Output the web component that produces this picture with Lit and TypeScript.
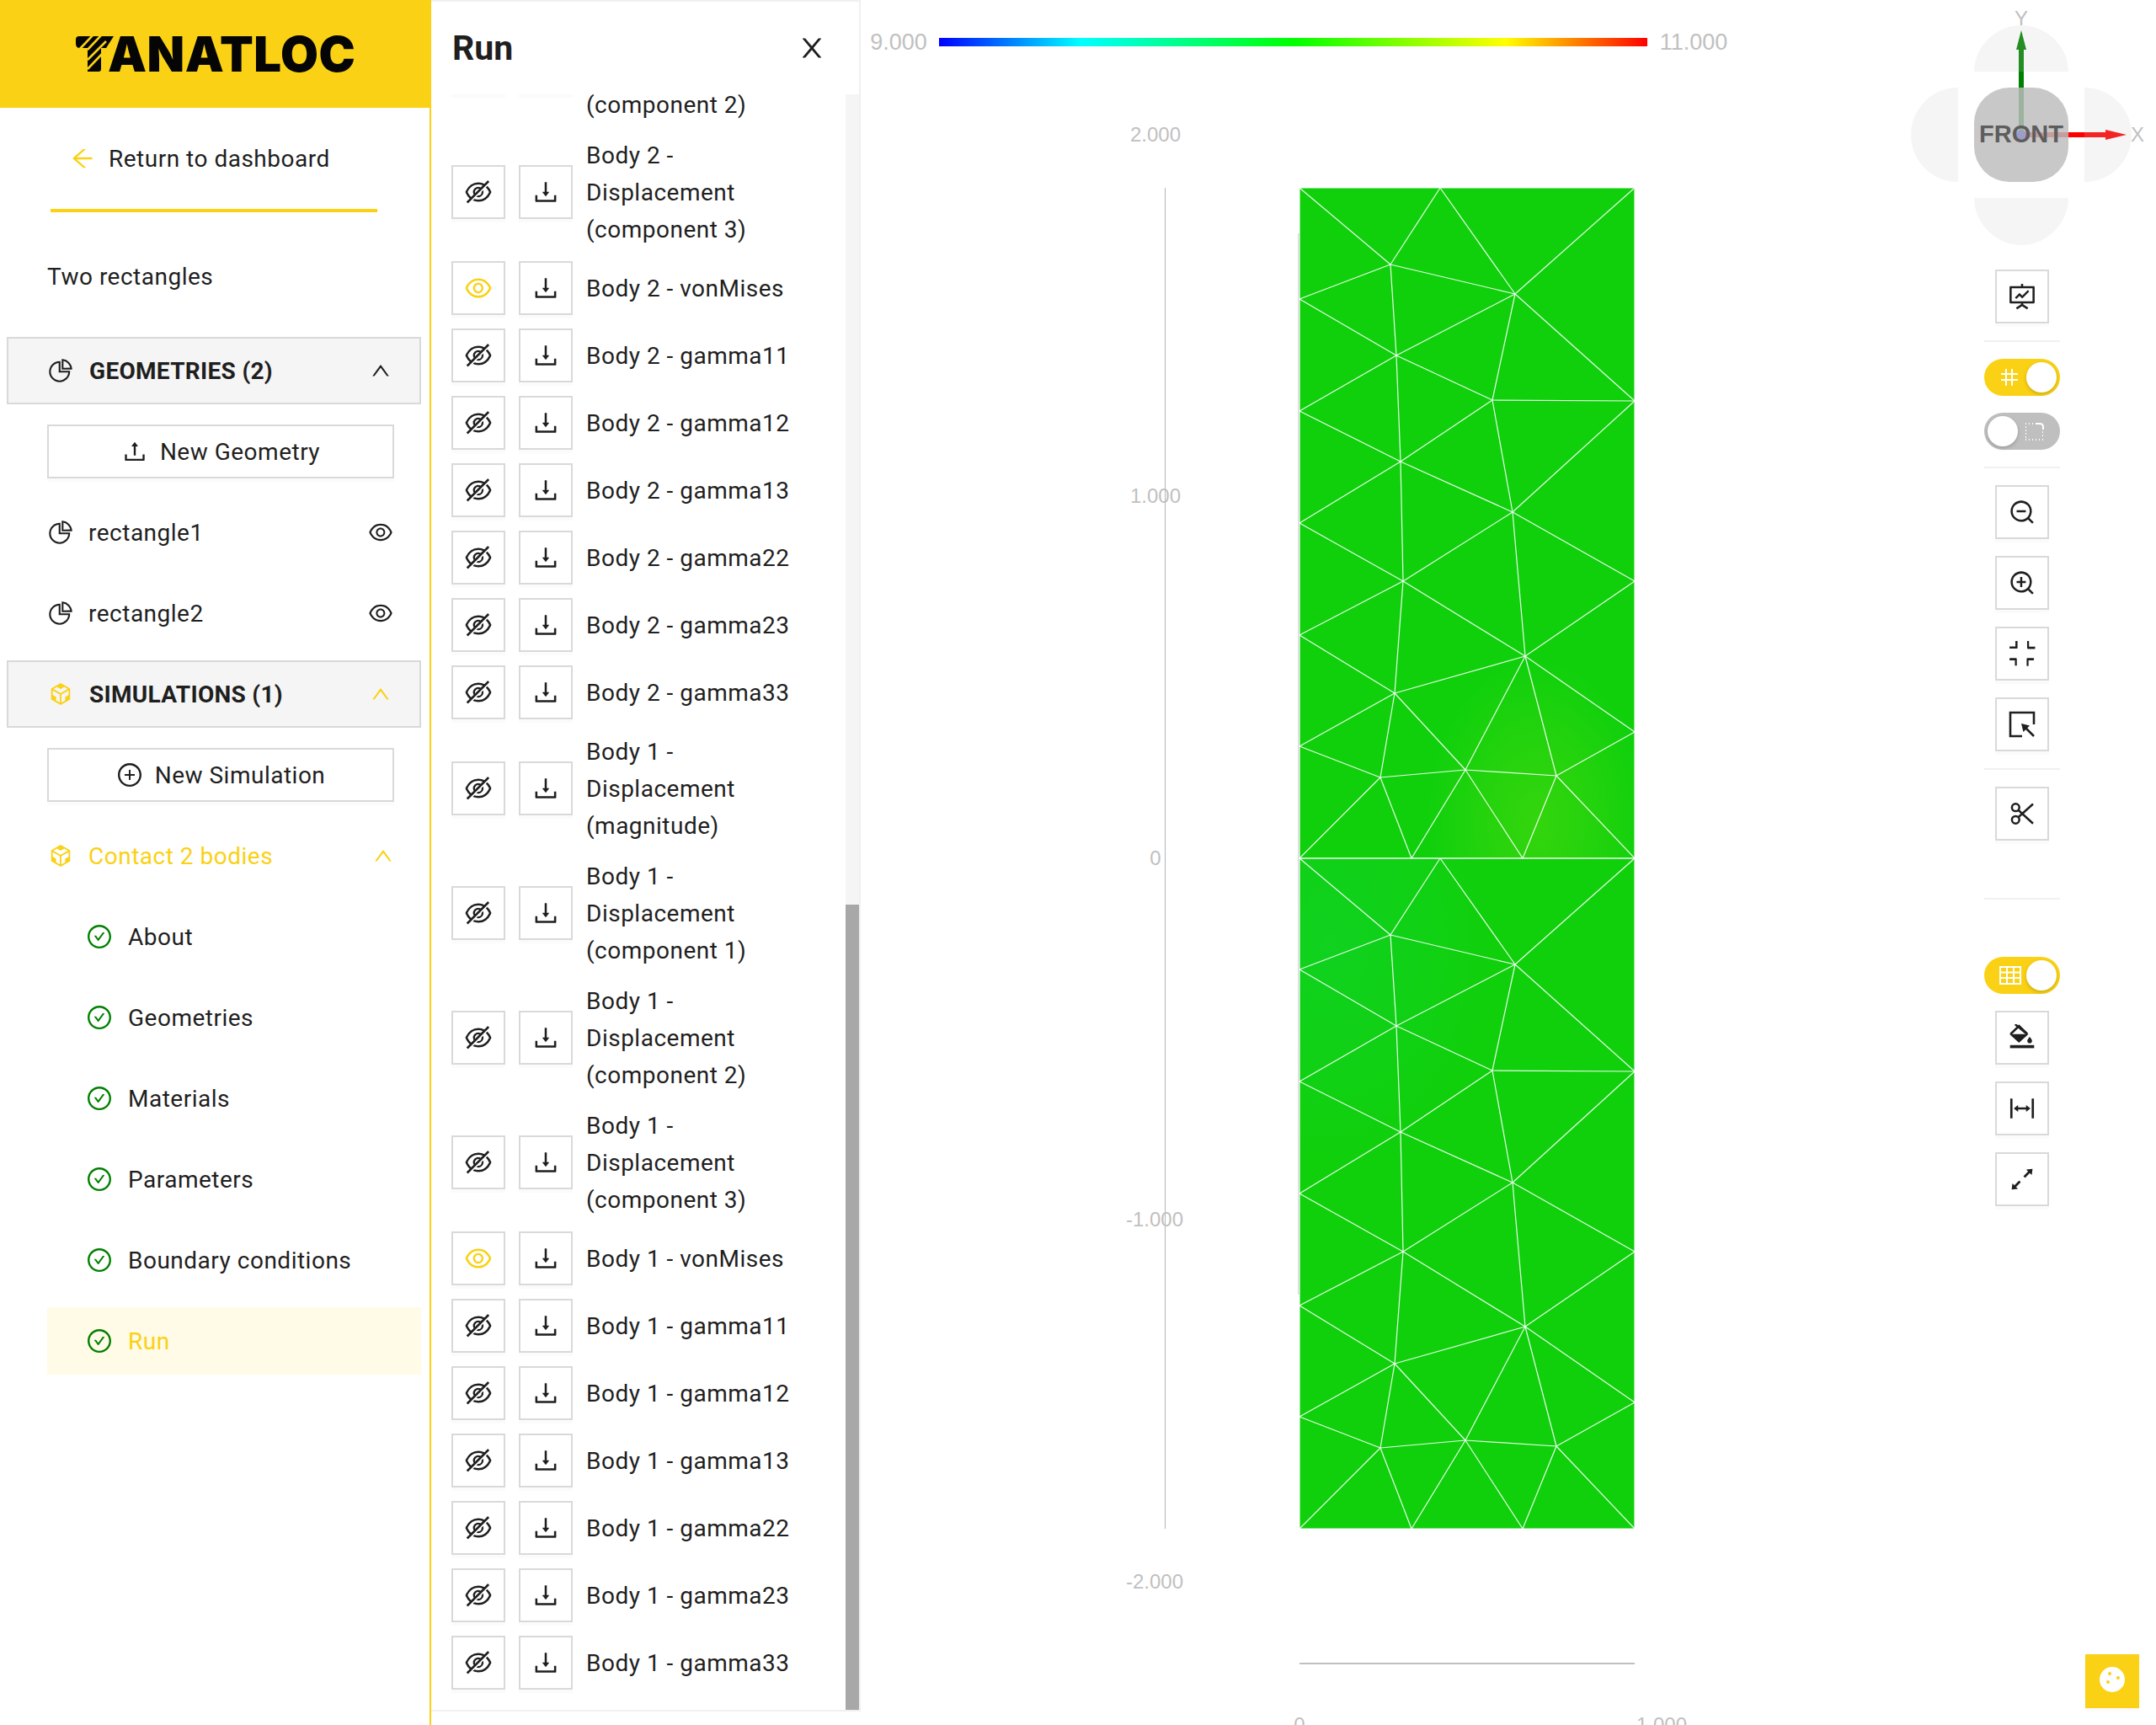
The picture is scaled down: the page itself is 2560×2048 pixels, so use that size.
import { LitElement, html, css, svg } from "lit";
import { customElement } from "lit/decorators.js";

const RING = "M512 64C264.6 64 64 264.6 64 512s200.6 448 448 448 448-200.6 448-448S759.4 64 512 64zm0 820c-205.4 0-372-166.6-372-372s166.6-372 372-372 372 166.6 372 372-166.6 372-372 372z";
const SEARCH = "M921 867L775 721c122.1-148.9 113.6-369.5-26-509-148-148.1-388.4-148.1-537 0-148.1 148.6-148.1 389 0 537 139.5 139.6 360.1 148.1 509 26l146 146c3.2 2.8 8.3 2.8 11 0l43-43c2.8-2.7 2.8-7.8 0-11zM696 696c-118.8 118.7-311.2 118.7-430 0-118.7-118.8-118.7-311.2 0-430 118.8-118.7 311.2-118.7 430 0 118.7 118.8 118.7 311.2 0 430z";

const ICONS: Record<string, string[]> = {
  arrowLeft: ["M872 474H286.9l350.2-304c5.6-4.9 2.2-14-5.2-14h-88.5c-3.9 0-7.6 1.4-10.5 3.9L155 487.8a31.96 31.96 0 000 48.3L535.1 866c1.5 1.3 3.3 2 5.2 2h91.5c7.4 0 10.8-9.2 5.2-14L286.9 550H872c4.4 0 8-3.6 8-8v-60c0-4.4-3.6-8-8-8z"],
  pie: ["M864 518H506V160c0-4.4-3.6-8-8-8h-26a398.46 398.46 0 00-282.8 117.1 398.19 398.19 0 00-85.7 127.1A397.61 397.61 0 0072 552a398.46 398.46 0 00117.1 282.8c36.7 36.7 79.5 65.6 127.1 85.7A397.61 397.61 0 00472 952a398.46 398.46 0 00282.8-117.1c36.7-36.7 65.6-79.5 85.7-127.1A397.61 397.61 0 00872 552v-26c0-4.4-3.6-8-8-8zM705.7 787.8A331.59 331.59 0 01470.4 884c-88.1-.4-170.9-34.9-233.2-97.2C174.5 724.1 140 640.7 140 552c0-88.7 34.5-172.1 97.2-234.8 54.6-54.6 124.9-87.9 200.8-95.5V586h364.3c-7.7 76.3-41.3 147-96.6 201.8zM952 462.4l-2.6-28.2c-8.5-92.1-49.4-179-115.2-244.6A399.4 399.4 0 00589 74.6L560.7 72c-4.7-.4-8.7 3.2-8.7 7.9V464c0 4.4 3.6 8 8 8l384-1c4.7 0 8.4-4 8-8.6zm-332.2-58.2V147.6a332.24 332.24 0 01166.4 89.8c45.7 45.6 77 103.6 90 166.1l-256.4.7z"],
  cube: ["M709.6 210l.4-.2h.2L512 96 313.9 209.8h-.2l.7.3L151.5 304v416L512 928l360.5-208V304l-162.9-94zM482.7 843.6L339.6 761V621.4L210 547.8V372.9l272.7 157.3v313.4zM238.2 321.5l134.7-77.8 138.9 79.7 139.1-79.9 135.2 78-273.9 158-274-158zM814 548.3l-128.8 73.1v139.1l-143.9 83V530.4L814 373.1v175.2z"],
  up: ["M890.5 755.3L537.9 269.2c-12.8-17.6-39-17.6-51.7 0L133.5 755.3A8 8 0 00140 768h75c5.1 0 9.9-2.5 12.9-6.6L512 369.8l284.1 391.6c3 4.1 7.8 6.6 12.9 6.6h75c6.5 0 10.3-7.2 6.5-12.7z"],
  upload: ["M400 317.7h73.9V656c0 4.4 3.6 8 8 8h60c4.4 0 8-3.6 8-8V317.7H624c6.7 0 10.4-7.7 6.3-12.9L518.3 163a8 8 0 00-12.6 0l-112 141.7c-4.1 5.3-.4 13 6.3 13zM878 626h-60c-4.4 0-8 3.6-8 8v154H214V634c0-4.4-3.6-8-8-8h-60c-4.4 0-8 3.6-8 8v198c0 17.7 14.3 32 32 32h684c17.7 0 32-14.3 32-32V634c0-4.4-3.6-8-8-8z"],
  download: ["M505.7 661a8 8 0 0012.6 0l112-141.7c4.1-5.2.4-12.9-6.3-12.9h-74.1V168c0-4.4-3.6-8-8-8h-60c-4.4 0-8 3.6-8 8v338.3H400c-6.7 0-10.4 7.7-6.3 12.9l112 141.8zM878 626h-60c-4.4 0-8 3.6-8 8v154H214V634c0-4.4-3.6-8-8-8h-60c-4.4 0-8 3.6-8 8v198c0 17.7 14.3 32 32 32h684c17.7 0 32-14.3 32-32V634c0-4.4-3.6-8-8-8z"],
  eye: ["M942.2 486.2C847.4 286.5 704.1 186 512 186c-192.2 0-335.4 100.5-430.2 300.3a60.3 60.3 0 000 51.5C176.6 737.5 319.9 838 512 838c192.2 0 335.4-100.5 430.2-300.3 7.7-16.2 7.7-35 0-51.5zM512 766c-161.3 0-279.4-81.8-362.7-254C232.6 339.8 350.7 258 512 258c161.3 0 279.4 81.8 362.7 254C791.5 684.2 673.4 766 512 766zm-4-430c-97.2 0-176 78.8-176 176s78.8 176 176 176 176-78.8 176-176-78.8-176-176-176zm0 288c-61.9 0-112-50.1-112-112s50.1-112 112-112 112 50.1 112 112-50.1 112-112 112z"],
  eyeOff: [
    "M942.2 486.2Q889.47 375.11 816.7 305l-50.88 50.88C807.31 395.53 843.45 447.4 874.7 512 791.5 684.2 673.4 766 512 766q-72.67 0-133.87-22.38L323 798.75Q408 838 512 838q288.3 0 430.2-300.3a60.29 60.29 0 000-51.5zm-63.57-320.64L836 122.88a8 8 0 00-11.32 0L715.31 232.2Q624.86 186 512 186q-288.3 0-430.2 300.3a60.3 60.3 0 000 51.5q56.69 119.4 136.5 191.41L112.48 835a8 8 0 000 11.31L155.17 889a8 8 0 0011.31 0l712.15-712.12a8 8 0 000-11.32zM149.3 512C232.6 339.8 350.7 258 512 258c54.54 0 104.13 9.36 149.12 28.39l-70.3 70.3a176 176 0 00-238.13 238.13l-83.42 83.42C223.1 637.49 183.3 582.28 149.3 512zm246.7 0a112.11 112.11 0 01146.2-106.69L401.31 546.2A112 112 0 01396 512z",
    "M508 624c-3.46 0-6.87-.16-10.25-.47l-52.82 52.82a176.09 176.09 0 00227.42-227.42l-52.82 52.82c.31 3.38.47 6.79.47 10.25a111.94 111.94 0 01-112 112z",
  ],
  plusCircle: ["M696 480H544V328c0-4.4-3.6-8-8-8h-48c-4.4 0-8 3.6-8 8v152H328c-4.4 0-8 3.6-8 8v48c0 4.4 3.6 8 8 8h152v152c0 4.4 3.6 8 8 8h48c4.4 0 8-3.6 8-8V544h152c4.4 0 8-3.6 8-8v-48c0-4.4-3.6-8-8-8z", RING],
  check: ["M699 353h-46.9c-10.2 0-19.9 4.9-25.9 13.3L469 584.3l-71.2-98.8c-6-8.3-15.6-13.3-25.9-13.3H325c-6.5 0-10.3 7.4-6.5 12.7l124.6 172.8a31.8 31.8 0 0051.7 0l210.6-292c3.9-5.3.1-12.7-6.4-12.7z", RING],
  close: ["M563.8 512l262.5-312.9c4.4-5.2.7-13.1-6.1-13.1h-79.8c-4.7 0-9.2 2.1-12.3 5.7L511.6 449.8 295.1 191.7c-3-3.6-7.5-5.7-12.3-5.7H203c-6.8 0-10.5 7.9-6.1 13.1L459.4 512 196.9 824.9A7.95 7.95 0 00203 838h79.8c4.7 0 9.2-2.1 12.3-5.7l216.5-258.1 216.5 258.1c3 3.6 7.5 5.7 12.3 5.7h79.8c6.8 0 10.5-7.9 6.1-13.1L563.8 512z"],
  screen: [
    "M312.1 591.5c3.1 3.1 8.2 3.1 11.3 0l101.8-101.8 86.1 86.2c3.1 3.1 8.2 3.1 11.3 0l226.3-226.5c3.1-3.1 3.1-8.2 0-11.3l-36.8-36.8a8.03 8.03 0 00-11.3 0L517 485.3l-86.1-86.2a8.03 8.03 0 00-11.3 0L275.3 543.4a8.03 8.03 0 000 11.3l36.8 36.8z",
    "M904 160H548V96c0-4.4-3.6-8-8-8h-56c-4.4 0-8 3.6-8 8v64H120c-17.7 0-32 14.3-32 32v520c0 17.7 14.3 32 32 32h356.4v32L311.6 884.1a7.92 7.92 0 00-2.3 11l30.3 47.2v.1c2.4 3.7 7.4 4.7 11.1 2.3L512 838.9l161.3 105.8c3.7 2.4 8.7 1.4 11.1-2.3v-.1l30.3-47.2a8 8 0 00-2.3-11L548 776.3V744h356c17.7 0 32-14.3 32-32V192c0-17.7-14.3-32-32-32zm-40 512H160V232h704v440z",
  ],
  zoomOut: ["M637 443H325c-4.4 0-8 3.6-8 8v60c0 4.4 3.6 8 8 8h312c4.4 0 8-3.6 8-8v-60c0-4.4-3.6-8-8-8z", SEARCH],
  zoomIn: ["M637 443H519V309c0-4.4-3.6-8-8-8h-60c-4.4 0-8 3.6-8 8v134H325c-4.4 0-8 3.6-8 8v60c0 4.4 3.6 8 8 8h118v134c0 4.4 3.6 8 8 8h60c4.4 0 8-3.6 8-8V519h118c4.4 0 8-3.6 8-8v-60c0-4.4-3.6-8-8-8z", SEARCH],
  compress: ["M326 664H104c-8.8 0-16 7.2-16 16v48c0 4.4 3.6 8 8 8h174v176c0 4.4 3.6 8 8 8h48c4.4 0 8-3.6 8-8V696c0-17.7-14.3-32-32-32zm16-576h-48c-4.4 0-8 3.6-8 8v176H96c-4.4 0-8 3.6-8 8v48c0 8.8 7.2 16 16 16h222c17.7 0 32-14.3 32-32V96c0-4.4-3.6-8-8-8zm578 576H698c-17.7 0-32 14.3-32 32v224c0 4.4 3.6 8 8 8h48c4.4 0 8-3.6 8-8V736h174c4.4 0 8-3.6 8-8v-48c0-8.8-7.2-16-16-16zm0-384H746V96c0-4.4-3.6-8-8-8h-48c-4.4 0-8 3.6-8 8v224c0 17.7 14.3 32 32 32h222c8.8 0 16-7.2 16-16v-48c0-8.8-7.2-16-16-16z"],
  columnWidth: ["M180 176h-60c-4.4 0-8 3.6-8 8v656c0 4.4 3.6 8 8 8h60c4.4 0 8-3.6 8-8V184c0-4.4-3.6-8-8-8zm724 0h-60c-4.4 0-8 3.6-8 8v656c0 4.4 3.6 8 8 8h60c4.4 0 8-3.6 8-8V184c0-4.4-3.6-8-8-8zM785.3 504.3L657.7 403.6a7.23 7.23 0 00-11.7 5.7V476H378v-62.8c0-6-7-9.4-11.7-5.7L238.7 508.3a7.14 7.14 0 000 11.3l127.5 100.8c4.7 3.7 11.7.4 11.7-5.7V548h268v62.8c0 6 7 9.4 11.7 5.7l127.5-100.8c3.8-2.9 3.8-8.5.2-11.4z"],
  arrowsAlt: ["M855 160.1l-189.2 23.5c-6.6.8-9.3 8.8-4.7 13.5l54.7 54.7-153.5 153.5a8.03 8.03 0 000 11.3l45.1 45.1c3.1 3.1 8.2 3.1 11.3 0l153.6-153.6 54.7 54.7a7.94 7.94 0 0013.5-4.7L863.9 169a7.9 7.9 0 00-8.9-8.9zM416.6 562.3a8.03 8.03 0 00-11.3 0L251.8 715.9l-54.7-54.7a7.94 7.94 0 00-13.5 4.7L160.1 855c-.6 5.2 3.7 9.5 8.9 8.9l189.2-23.5c6.6-.8 9.3-8.8 4.7-13.5l-54.7-54.7 153.6-153.6c3.1-3.1 3.1-8.2 0-11.3l-45.2-45z"],
};

const icon = (name: string, size = 32) => html`<svg class="ic" width=${size} height=${size} viewBox="0 0 1024 1024" fill="currentColor">
  ${ICONS[name].map((d) => svg`<path d=${d}></path>`)}
</svg>`;

const RESULTS: { lines: string[]; shown?: boolean; cut?: boolean }[] = [
  { lines: ["(component 2)"], cut: true },
  { lines: ["Body 2 -", "Displacement", "(component 3)"] },
  { lines: ["Body 2 - vonMises"], shown: true },
  { lines: ["Body 2 - gamma11"] },
  { lines: ["Body 2 - gamma12"] },
  { lines: ["Body 2 - gamma13"] },
  { lines: ["Body 2 - gamma22"] },
  { lines: ["Body 2 - gamma23"] },
  { lines: ["Body 2 - gamma33"] },
  { lines: ["Body 1 -", "Displacement", "(magnitude)"] },
  { lines: ["Body 1 -", "Displacement", "(component 1)"] },
  { lines: ["Body 1 -", "Displacement", "(component 2)"] },
  { lines: ["Body 1 -", "Displacement", "(component 3)"] },
  { lines: ["Body 1 - vonMises"], shown: true },
  { lines: ["Body 1 - gamma11"] },
  { lines: ["Body 1 - gamma12"] },
  { lines: ["Body 1 - gamma13"] },
  { lines: ["Body 1 - gamma22"] },
  { lines: ["Body 1 - gamma23"] },
  { lines: ["Body 1 - gamma33"] },
];

const STEPS = ["About", "Geometries", "Materials", "Parameters", "Boundary conditions"];

// mesh nodes of the top body, the lower one is the same shifted by 796
const N: Record<string, [number, number]> = {
  A: [1543, 223], T: [1710, 223], B: [1941, 223],
  n1: [1651, 314], n2: [1799, 349], L1: [1543, 355], n3: [1658, 422], n4: [1772, 475], R1: [1941, 476],
  L2: [1543, 488], n5: [1663, 548], n6: [1796, 608], L3: [1543, 621], n7: [1666, 690], R2: [1941, 690],
  L4: [1543, 754], n8: [1811, 779], n9: [1656, 823], R3: [1941, 869], L5: [1543, 886], n10: [1740, 914],
  n11: [1848, 921], n12: [1639, 923], C: [1543, 1019], b1: [1676, 1019], b2: [1808, 1019], D: [1941, 1019],
};
const EDGES = `A-T T-B A-C B-D C-D A-n1 T-n1 T-n2 B-n2 n1-n2 n1-L1 n1-n3 L1-n3 n2-n3 n2-n4 n2-R1 n3-n4 n3-L2 n3-n5
n4-R1 n4-n5 n4-n6 R1-n6 L2-n5 n5-L3 n5-n6 n5-n7 L3-n7 n6-n7 n6-n8 n6-R2 n7-L4 n7-n9 n7-n8 n8-R2 n8-n9 n8-n10
n8-n11 n8-R3 L4-n9 n9-L5 n9-n12 n9-n10 L5-n12 n12-n10 n12-C n12-b1 b1-n10 n10-b2 n10-n11 b2-n11 n11-R3 n11-D`
  .split(/\s+/)
  .map((e) => e.split("-"));

@customElement("app-root")
export class AppRoot extends LitElement {
  static styles = css`
    :host {
      display: block;
      width: 2560px;
      height: 2048px;
      overflow: hidden;
      background: #fff;
      font-family: Roboto, "Noto Sans", sans-serif;
      font-size: 28px;
      line-height: 44px;
      letter-spacing: 0.5px;
      color: #1f1f1f;
    }
    .ic {
      display: block;
      flex: none;
    }
    .layout {
      display: flex;
      height: 2048px;
    }

    .side {
      width: 512px;
      flex: none;
      box-sizing: border-box;
      border-right: 2px solid #fad114;
    }
    .logo {
      width: 512px;
      height: 128px;
      background: #fad114;
      display: flex;
      align-items: center;
      padding-left: 90px;
      box-sizing: border-box;
      color: #050505;
    }
    .logo-text {
      font-family: Inter, sans-serif;
      font-weight: 900;
      font-size: 58px;
      line-height: 128px;
      margin-left: -7px;
      letter-spacing: 0.5px;
    }
    .back {
      display: flex;
      align-items: center;
      gap: 15px;
      height: 120px;
      padding-left: 82px;
    }
    .back .ic {
      color: #fad114;
    }
    .back-line {
      height: 4px;
      margin: 0 62px 0 60px;
      background: #fad114;
    }
    .title {
      margin: 55px 0 49px 56px;
    }
    .group {
      display: flex;
      align-items: center;
      box-sizing: border-box;
      height: 80px;
      width: 492px;
      margin-left: 8px;
      padding: 0 33px 0 46px;
      background: #f5f5f5;
      border: 2px solid #d9d9d9;
      font-weight: 700;
      letter-spacing: 0.3px;
    }
    .group .label {
      flex: 1;
      margin-left: 18px;
    }
    .new {
      display: flex;
      align-items: center;
      justify-content: center;
      gap: 14px;
      box-sizing: border-box;
      height: 64px;
      width: 412px;
      margin: 24px 0 24px 56px;
      border: 2px solid #d9d9d9;
      box-shadow: 0 4px 0 rgba(0, 0, 0, 0.015);
      background: #fff;
    }
    .item {
      display: flex;
      align-items: center;
      box-sizing: border-box;
      height: 80px;
      margin: 0 0 16px 56px;
      width: 412px;
    }
    .label {
      margin-top: 1px;
      margin-bottom: -1px;
    }
    .item .label {
      flex: 1;
      margin-left: 17px;
    }
    .active {
      color: #fad114;
    }
    .step {
      padding-left: 46px;
      width: 444px;
    }
    .step .ic {
      color: #008000;
    }
    .step .label {
      margin-left: 18px;
    }
    .step.on {
      background: #fffbe6;
    }
    .step.on .label {
      color: #fad114;
    }

    .panel {
      width: 510px;
      flex: none;
      box-sizing: border-box;
      height: 2032px;
      border-top: 2px solid #f0f0f0;
      border-right: 2px solid #f0f0f0;
      border-bottom: 2px solid #f0f0f0;
      display: flex;
      flex-direction: column;
    }
    .panel-head {
      display: flex;
      align-items: center;
      justify-content: space-between;
      height: 110px;
      flex: none;
      padding: 0 38px 0 25px;
      box-sizing: border-box;
      font-size: 41px;
      font-weight: 700;
      letter-spacing: 0;
    }
    .panel-body {
      flex: 1;
      display: flex;
      min-height: 0;
    }
    .results {
      flex: 1;
      overflow: hidden;
    }
    .results-inner {
      margin-top: -106px;
    }
    .result {
      display: flex;
      align-items: center;
      gap: 16px;
      padding: 8px 0 8px 24px;
    }
    .result.cut {
      box-sizing: border-box;
      height: 148px;
    }
    .result.cut .text {
      align-self: flex-end;
    }
    .text {
      margin-top: 1px;
      margin-bottom: -1px;
    }
    .btn {
      display: flex;
      align-items: center;
      justify-content: center;
      box-sizing: border-box;
      width: 64px;
      height: 64px;
      flex: none;
      border: 2px solid #d9d9d9;
      box-shadow: 0 4px 0 rgba(0, 0, 0, 0.015);
      background: #fff;
    }
    .on-eye {
      color: #fad114;
    }
    .scrollbar {
      width: 16px;
      flex: none;
      background: #f5f5f5;
    }
    .thumb {
      margin-top: 962px;
      height: 956px;
      background: #a8a8a8;
    }

    .stage {
      flex: 1;
      position: relative;
      min-width: 0;
    }
    .scene {
      position: absolute;
      left: 0;
      top: 0;
    }
    .tick {
      font: 24px "Liberation Sans", Arial, sans-serif;
      letter-spacing: 0;
      fill: #c0c0c0;
      text-anchor: middle;
    }
    .scale {
      font-size: 27px;
    }
    .front {
      font: 700 29px "Liberation Sans", Arial, sans-serif;
      letter-spacing: 0;
      fill: #5d5d5d;
      text-anchor: middle;
    }
    .tools {
      position: absolute;
      top: 320px;
      left: 1334px;
      width: 90px;
      display: flex;
      flex-direction: column;
      align-items: center;
      gap: 20px;
    }
    .sep {
      width: 90px;
      height: 2px;
      background: #f0f0f0;
    }
    .far {
      margin: 48px 0;
    }
    .toggle {
      position: relative;
      width: 90px;
      height: 44px;
      border-radius: 22px;
      background: #fad114;
      color: #fff;
      display: flex;
      align-items: center;
    }
    .toggle.off {
      background: #bfbfbf;
      justify-content: flex-end;
    }
    .toggle svg {
      margin: 0 0 0 18px;
    }
    .toggle.off svg {
      margin: 0 18px 0 0;
    }
    .knob {
      position: absolute;
      top: 4px;
      right: 4px;
      width: 36px;
      height: 36px;
      border-radius: 50%;
      background: #fff;
      box-shadow: 0 2px 4px rgba(0, 35, 11, 0.2);
    }
    .toggle.off .knob {
      right: auto;
      left: 4px;
    }
    .cookie {
      position: absolute;
      left: 1454px;
      top: 1964px;
      width: 64px;
      height: 64px;
      background: #fad114;
      box-shadow: 0 4px 0 rgba(0, 0, 0, 0.015);
      display: flex;
      align-items: center;
      justify-content: center;
    }
    .cookie svg {
      margin-bottom: 4px;
    }
  `;

  private item(name: string) {
    return html`<div class="item">
      ${icon("pie")}
      <span class="label">${name}</span>
      ${icon("eye")}
    </div>`;
  }

  private mesh(dy: number) {
    return EDGES.map(([a, b]) => {
      const p = N[a];
      const q = N[b];
      return svg`<line x1=${p[0]} y1=${p[1] + dy} x2=${q[0]} y2=${q[1] + dy}></line>`;
    });
  }

  private scene() {
    return html`<svg class="scene" width="1538" height="2048" viewBox="1022 0 1538 2048">
      <defs>
        <linearGradient id="rainbow">
          <stop offset="0" stop-color="#0000ff"></stop>
          <stop offset="0.2" stop-color="#00ffff"></stop>
          <stop offset="0.5" stop-color="#00ff00"></stop>
          <stop offset="0.8" stop-color="#ffff00"></stop>
          <stop offset="1" stop-color="#ff0000"></stop>
        </linearGradient>
        <radialGradient id="hot">
          <stop offset="0" stop-color="#34d50d"></stop>
          <stop offset="0.5" stop-color="#24d30d"></stop>
          <stop offset="1" stop-color="#24d30d" stop-opacity="0"></stop>
        </radialGradient>
        <radialGradient id="cool">
          <stop offset="0" stop-color="#10d224"></stop>
          <stop offset="1" stop-color="#10d224" stop-opacity="0"></stop>
        </radialGradient>
        <clipPath id="upper"><rect x="1543" y="223" width="398" height="796"></rect></clipPath>
        <clipPath id="lower"><rect x="1543" y="1019" width="398" height="796"></rect></clipPath>
      </defs>

      <text class="tick scale" x="1067" y="59">9.000</text>
      <rect x="1115" y="45" width="841" height="10" fill="url(#rainbow)"></rect>
      <text class="tick scale" x="2011" y="59">11.000</text>

      <rect x="1383" y="223" width="1" height="1592" fill="#b5b5b5"></rect>
      <text class="tick" x="1372" y="168">2.000</text>
      <text class="tick" x="1372" y="597">1.000</text>
      <text class="tick" x="1372" y="1027">0</text>
      <text class="tick" x="1371" y="1456">-1.000</text>
      <text class="tick" x="1371" y="1886">-2.000</text>
      <rect x="1543" y="1974" width="398" height="2" fill="#c0c0c0"></rect>
      <text class="tick" x="1543" y="2056">0</text>
      <text class="tick" x="1973" y="2056">1.000</text>

      <rect x="1541" y="277" width="2" height="1260" fill="#d9d9d9"></rect>
      <rect x="1543" y="223" width="398" height="1592" fill="#10d00c"></rect>
      <ellipse cx="1825" cy="975" rx="130" ry="190" fill="url(#hot)" clip-path="url(#upper)"></ellipse>
      <ellipse cx="1580" cy="1120" rx="190" ry="260" fill="url(#cool)" fill-opacity="0.8" clip-path="url(#lower)"></ellipse>
      <g stroke="#ffffff" stroke-opacity="0.9" stroke-width="1.2">${this.mesh(0)}${this.mesh(796)}</g>

      <rect x="2397" y="59" width="6" height="99" fill="#008000"></rect>
      <polygon points="2400,36 2406,59 2394,59" fill="#008000"></polygon>
      <rect x="2400" y="157" width="100" height="6" fill="#ff0000"></rect>
      <polygon points="2525,160 2500,166 2500,154" fill="#ff0000"></polygon>
      <circle cx="2400" cy="160" r="6" fill="#0000ff"></circle>
      <g fill="#c8c8c8" fill-opacity="0.18">
        <path d="M2344 85C2344 55 2370 30 2400 30S2456 55 2456 85Z"></path>
        <path d="M2344 235C2344 265 2370 291 2400 291S2456 265 2456 235Z"></path>
        <path d="M2325 104C2293 104 2269 130 2269 160S2293 216 2325 216Z"></path>
        <path d="M2475 104C2507 104 2531 130 2531 160S2507 216 2475 216Z"></path>
      </g>
      <rect x="2344" y="104" width="112" height="112" rx="42" fill="#bdbdbd" fill-opacity="0.83"></rect>
      <text class="front" x="2400" y="169">FRONT</text>
      <text class="tick" x="2400" y="30">Y</text>
      <text class="tick" x="2538" y="168">X</text>
    </svg>`;
  }

  private tools() {
    return html`<div class="tools">
      <div class="btn">${icon("screen", 36)}</div>
      <div class="sep"></div>
      <div class="toggle">
        <svg width="24" height="24" viewBox="0 0 24 24" fill="none" stroke="#fff" stroke-width="2">
          <path d="M8 2v20M15 2v20M2 8h20M2 15h20"></path>
        </svg>
        <span class="knob"></span>
      </div>
      <div class="toggle off">
        <svg width="24" height="24" viewBox="0 0 24 24" fill="none" stroke="#fff" stroke-width="2">
          <path d="M1 3h1M5 3h1M9 3h1M1 7h1M1 11h1M1 15h1M1 19h1M1 22h1M5 22h1M9 22h1M13 22h1M17 22h1M21 22h1M21 17h1M21 13h1"></path>
          <path d="M13 3h5q4 0 4 4v3"></path>
        </svg>
        <span class="knob"></span>
      </div>
      <div class="sep"></div>
      <div class="btn">${icon("zoomOut", 34)}</div>
      <div class="btn">${icon("zoomIn", 34)}</div>
      <div class="btn">${icon("compress", 36)}</div>
      <div class="btn">
        <svg width="32" height="32" viewBox="0 0 32 32" fill="none" stroke="currentColor" stroke-width="2.6">
          <path d="M16 30H2V2H30V16M30 30 20 20"></path>
          <polygon points="15,15 25,17.5 17.5,25" fill="currentColor" stroke="none"></polygon>
        </svg>
      </div>
      <div class="sep"></div>
      <div class="btn">
        <svg width="32" height="32" viewBox="0 0 32 32" fill="none" stroke="currentColor" stroke-width="2.5">
          <circle cx="8.3" cy="8.7" r="4.4"></circle>
          <circle cx="8.3" cy="23.3" r="4.4"></circle>
          <path d="M11.5 11.8 29 27.7M11.5 20.2 29 4.5"></path>
        </svg>
      </div>
      <div class="sep far"></div>
      <div class="toggle">
        <svg width="26" height="22" viewBox="0 0 26 22" fill="none" stroke="#fff" stroke-width="2">
          <path d="M1 1h24v20H1zM1 7.5h24M1 14h24M9 1v20M17 1v20"></path>
        </svg>
        <span class="knob"></span>
      </div>
      <div class="btn">
        <svg width="32" height="32" viewBox="0 0 32 32" fill="currentColor">
          <path d="M2.3 11.7 12.3 2 22.3 11.7" fill="none" stroke="currentColor" stroke-width="2.6"></path>
          <path d="M7.7 0 21 11" fill="none" stroke="currentColor" stroke-width="2.4"></path>
          <polygon points="1,11.7 23.6,11.7 12.3,22"></polygon>
          <path d="M25 15s2.8 3 2.8 4.8a2.8 2.8 0 01-5.6 0C22.2 18 25 15 25 15z"></path>
          <rect x="1.7" y="24.8" width="28.6" height="3.6"></rect>
        </svg>
      </div>
      <div class="btn">${icon("columnWidth", 36)}</div>
      <div class="btn">${icon("arrowsAlt", 36)}</div>
    </div>`;
  }

  render() {
    return html`<div class="layout">
      <aside class="side">
        <div class="logo">
          <svg width="45" height="42" viewBox="0 0 45 42">
            <path d="M4 0h41l-9 14h-6v25q0 3-3 3H14V14H5Q0 14 0 9V4q0-4 4-4z" fill="#050505"></path>
            <path d="M4 16 20 -1M14 16 30 -1M14 28 36 6M14 39 34 18" stroke="#fad114" stroke-width="2.6" fill="none"></path>
          </svg>
          <span class="logo-text">ANATLOC</span>
        </div>
        <div class="back">${icon("arrowLeft")}<span class="label">Return to dashboard</span></div>
        <div class="back-line"></div>
        <div class="title">Two rectangles</div>

        <div class="group">${icon("pie")}<span class="label">GEOMETRIES (2)</span>${icon("up", 26)}</div>
        <div class="new">${icon("upload")}<span class="label">New Geometry</span></div>
        ${this.item("rectangle1")} ${this.item("rectangle2")}

        <div class="group">
          <span class="active">${icon("cube")}</span>
          <span class="label">SIMULATIONS (1)</span>
          <span class="active">${icon("up", 26)}</span>
        </div>
        <div class="new">${icon("plusCircle")}<span class="label">New Simulation</span></div>
        <div class="item active">${icon("cube")}<span class="label">Contact 2 bodies</span>${icon("up", 26)}</div>
        ${STEPS.map((s) => html`<div class="item step">${icon("check")}<span class="label">${s}</span></div>`)}
        <div class="item step on">${icon("check")}<span class="label">Run</span></div>
      </aside>

      <section class="panel">
        <header class="panel-head"><span>Run</span>${icon("close", 36)}</header>
        <div class="panel-body">
          <div class="results">
            <div class="results-inner">
              ${RESULTS.map(
                (r) => html`<div class="result ${r.cut ? "cut" : ""}">
                  <div class="btn ${r.shown ? "on-eye" : ""}">${icon(r.shown ? "eye" : "eyeOff", 36)}</div>
                  <div class="btn">${icon("download", 34)}</div>
                  <div class="text">${r.lines.map((l) => html`${l}<br />`)}</div>
                </div>`
              )}
            </div>
          </div>
          <div class="scrollbar"><div class="thumb"></div></div>
        </div>
      </section>

      <main class="stage">
        ${this.scene()} ${this.tools()}
        <div class="cookie">
          <svg width="30" height="30" viewBox="0 0 30 30">
            <circle cx="15" cy="15" r="15" fill="#fff"></circle>
            <circle cx="12" cy="8" r="2" fill="#fad114"></circle>
            <circle cx="22" cy="13" r="2" fill="#fad114"></circle>
            <circle cx="10" cy="18" r="2" fill="#fad114"></circle>
          </svg>
        </div>
      </main>
    </div>`;
  }
}
